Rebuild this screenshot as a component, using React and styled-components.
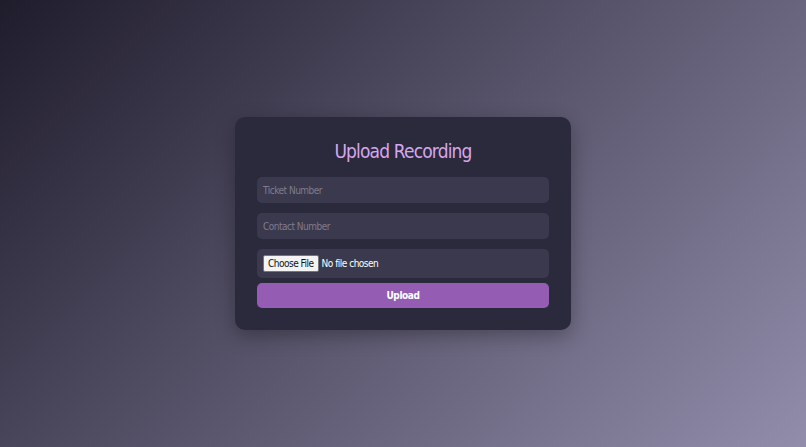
import React from "react";
import styled, { createGlobalStyle } from "styled-components";

const FONT = `Tahoma, "DejaVu Sans", "Liberation Sans", sans-serif`;

const GlobalStyle = createGlobalStyle`
  * { box-sizing: border-box; }
  html, body { margin: 0; padding: 0; height: 100%; }
  body {
    font-family: ${FONT};
    font-stretch: condensed;
    background: linear-gradient(135deg, #1f1c2c 0%, #928dab 100%);
    background-attachment: fixed;
  }
`;

const Page = styled.div`
  min-height: 100vh;
  display: flex;
  align-items: center;
  justify-content: center;
`;

const Card = styled.form`
  width: 336px;
  padding: 22px;
  background: #2b293c;
  border-radius: 10px;
  box-shadow: 0 6px 20px rgba(0, 0, 0, 0.3);
  display: flex;
  flex-direction: column;
`;

const Title = styled.h2`
  margin: 0 0 14px;
  text-align: center;
  font-family: ${FONT};
  font-stretch: condensed;
  font-weight: normal;
  font-size: 19px;
  letter-spacing: -0.85px;
  line-height: 24px;
  color: #d3a8ee;
`;

const Field = styled.input`
  height: 26px;
  margin-bottom: 10px;
  padding: 0 6px;
  border: none;
  outline: none;
  border-radius: 5px;
  background: #3b394d;
  color: #e8e6f0;
  font-family: ${FONT};
  font-stretch: condensed;
  font-size: 10px;
  letter-spacing: -0.5px;
  &::placeholder { color: #7f7c8f; }
`;

const FileBox = styled.label`
  height: 29px;
  margin-bottom: 5px;
  padding: 0 6px;
  border-radius: 5px;
  background: #3b394d;
  display: flex;
  align-items: center;
`;

const FileInput = styled.input`
  font-family: ${FONT};
  font-stretch: condensed;
  font-size: 10px;
  letter-spacing: -0.5px;
  color: #ffffff;
  &::file-selector-button {
    font-family: ${FONT};
    font-stretch: condensed;
    font-size: 10px;
    letter-spacing: -0.5px;
    height: 17px;
    padding: 0 4px;
    margin-right: 3px;
    background: #f3f3f3;
    color: #111;
    border: 1px solid #767676;
    border-radius: 2px;
  }
`;

const Submit = styled.button`
  height: 25px;
  border: none;
  border-radius: 5px;
  background: #955cb3;
  color: #ffffff;
  font-family: ${FONT};
  font-stretch: condensed;
  font-weight: bold;
  font-size: 10px;
  letter-spacing: -0.4px;
  cursor: pointer;
`;

export default function App() {
  return (
    <>
      <GlobalStyle />
      <Page>
        <Card onSubmit={(e) => e.preventDefault()}>
          <Title>Upload Recording</Title>
          <Field type="text" placeholder="Ticket Number" />
          <Field type="text" placeholder="Contact Number" />
          <FileBox>
            <FileInput type="file" />
          </FileBox>
          <Submit type="submit">Upload</Submit>
        </Card>
      </Page>
    </>
  );
}
